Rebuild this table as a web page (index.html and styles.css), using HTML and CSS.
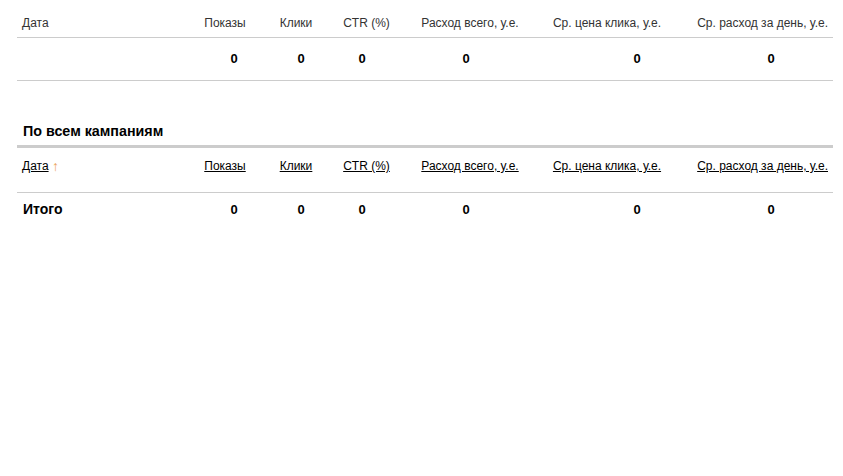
FILE: index.html
```html
<!DOCTYPE html>
<html lang="ru">
<head>
    <meta charset="UTF-8">
    <title>Статистика</title>
    <link rel="stylesheet" href="styles.css">
</head>
<body>
<div class="stat-page">

    <!-- по дням -->
    <div class="stat-table">
        <div class="stat-row head-row">
            <span class="cell first">Дата</span>
            <span class="cell">Показы</span>
            <span class="cell">Клики</span>
            <span class="cell">CTR (%)</span>
            <span class="cell">Расход всего, у.е.</span>
            <span class="cell">Ср. цена клика, у.е.</span>
            <span class="cell last">Ср. расход за день, у.е.</span>
        </div>
        <div class="stat-row data-row">
            <span class="cell first"></span>
            <span class="cell num">0</span>
            <span class="cell num">0</span>
            <span class="cell num">0</span>
            <span class="cell num">0</span>
            <span class="cell num">0</span>
            <span class="cell num">0</span>
        </div>
    </div>

    <!-- итого по кампаниям -->
    <h3 class="section-title">По всем кампаниям</h3>
    <div class="stat-table">
        <div class="stat-row head-row sortable">
            <span class="cell first"><a href="#">Дата</a> <span class="sort-arrow">&uarr;</span></span>
            <span class="cell"><a href="#">Показы</a></span>
            <span class="cell"><a href="#">Клики</a></span>
            <span class="cell"><a href="#">CTR (%)</a></span>
            <span class="cell"><a href="#">Расход всего, у.е.</a></span>
            <span class="cell"><a href="#">Ср. цена клика, у.е.</a></span>
            <span class="cell last"><a href="#">Ср. расход за день, у.е.</a></span>
        </div>
        <div class="stat-row data-row total-row">
            <span class="cell first">Итого</span>
            <span class="cell num">0</span>
            <span class="cell num">0</span>
            <span class="cell num">0</span>
            <span class="cell num">0</span>
            <span class="cell num">0</span>
            <span class="cell num">0</span>
        </div>
    </div>

</div>
</body>
</html>
```

FILE: styles.css
```css
/* ========== общие ========== */
body {
    margin: 0;
    padding: 0;
    background: #fff;
    color: #000;
    font-family: "Liberation Sans", Arial, sans-serif;
}
.stat-page {
    width: 816px;
    padding: 8px 10px 0 17px;
}

/* ========== таблица ========== */
.stat-row {
    display: grid;
    align-items: center;
    border-bottom: 1px solid #ccc;
}
.head-row {
    grid-template-columns: 173px 70px 72px 69px 138px 136px 158px;
    height: 29px;
    font-size: 12px;
    line-height: 14px;
    color: #333;
}
.head-row .cell {
    text-align: center;
    white-space: nowrap;
}
.head-row .first {
    text-align: left;
    padding-left: 5px;
}
.head-row .last {
    text-align: right;
    padding-right: 5px;
}
.data-row {
    grid-template-columns: 173px 88px 46px 76px 132px 210px 58px 1fr;
    height: 41px;
    padding-bottom: 1px;
    font-size: 13px;
    font-weight: bold;
}
.data-row .num {
    text-align: center;
}
.data-row .first {
    padding-left: 6px;
}

/* --- заголовок секции --- */
.section-title {
    margin: 40px 0 0;
    height: 20px;
    line-height: 21px;
    padding: 0 0 4px 6px;
    font-size: 14.3px;
    font-weight: bold;
    border-bottom: 3px solid #ccc;
}

/* --- сортируемая шапка --- */
.sortable {
    height: 36px;
    padding-bottom: 8px;
}
.sortable a {
    color: #000;
    text-decoration: underline;
}
.sort-arrow {
    display: inline-block;
    vertical-align: top;
    color: #eba45c;
    font-size: 14px;
    line-height: 14px;
}
.total-row {
    height: 32px;
    border-bottom: none;
}
.total-row .first {
    font-size: 14px;
}
```
